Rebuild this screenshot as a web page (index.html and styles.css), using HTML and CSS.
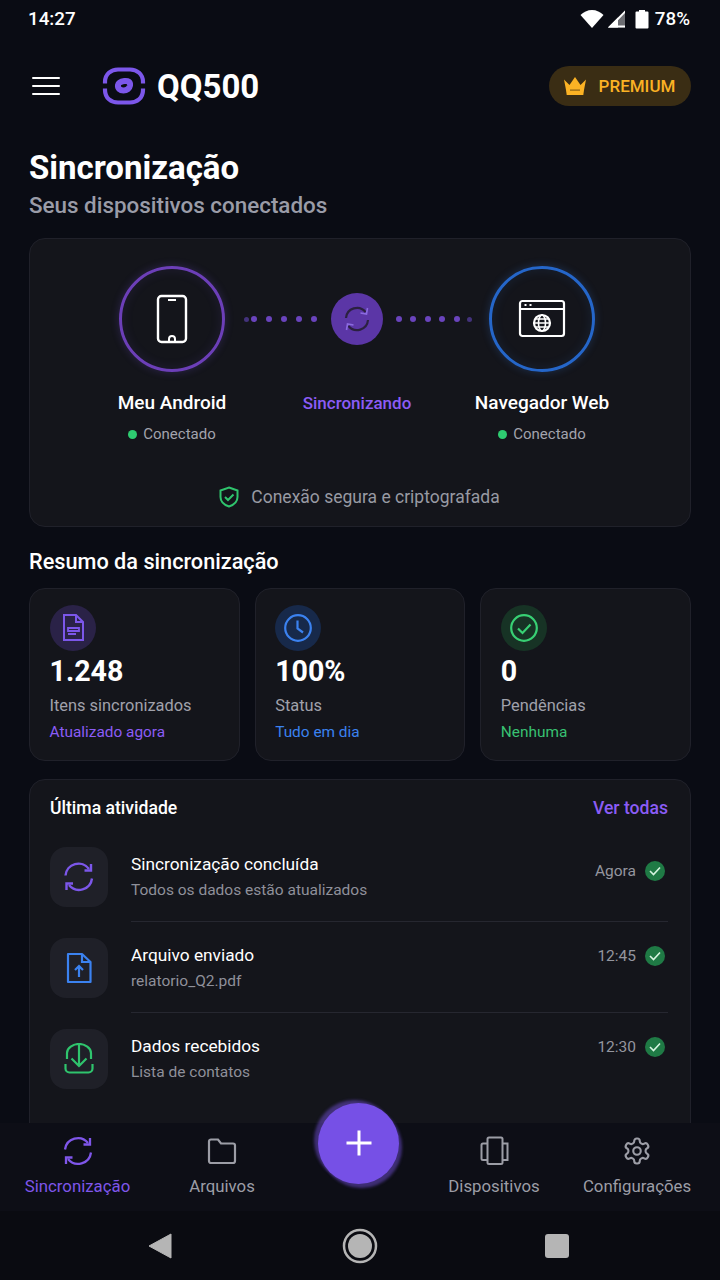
FILE: index.html
```html
<!DOCTYPE html>
<html lang="pt">
<head>
<meta charset="utf-8">
<title>QQ500</title>
<link rel="stylesheet" href="styles.css">
</head>
<body>
<div class="screen">
  <div class="status">
    <span>14:27</span>
    <div class="status-right">
      <svg width="24" height="20" viewBox="0 0 24 20"><path d="M.5 6C3.500 3 7.500 1 12 1s8.500 2 11.500 5L12 19z" fill="#fff"/></svg>
      <svg width="20" height="20" viewBox="0 0 20 20"><path d="M1 18.500 18 1.500v17z" fill="#fff" opacity=".4"/><path d="M1 18.500 11 8.500v10z" fill="#fff"/><path d="M1 18.500 18 1.500v2.500L6 16.500h12v2z" fill="#fff"/></svg>
      <svg class="batt" width="14" height="20" viewBox="0 0 14 20"><path d="M4 2.500V1h6v1.500h2.500a1 1 0 0 1 1 1V18.500a1 1 0 0 1-1 1H1.500a1 1 0 0 1-1-1V3.500a1 1 0 0 1 1-1z" fill="#fff"/></svg>
      <span>78%</span>
    </div>
  </div>

  <header class="topbar">
    <div class="burger"><i></i><i></i><i></i></div>
    <svg class="logo" width="44" height="38" viewBox="0 0 44 38" fill="none" stroke="#7c57ea" stroke-width="4.200"><path d="M3 16.500V15C3 7 9 2.500 16 2.500H28C35 2.500 41 7 41 15V16.500"/><path d="M3 21.500V23C3 31 9 35.500 16 35.500H28C35 35.500 41 31 41 23V21.500"/><path d="M22.500 14C26 13.500 28.500 15 28 18.500 27.500 21.500 25 23.500 21.500 23.500 18 23.500 15.500 21.500 16 18 16.500 15.500 19 14.500 22.500 14Z" stroke-width="6"/></svg>
    <div class="brand">QQ500</div>
    <div class="premium">
      <svg width="24" height="20" viewBox="0 0 24 20"><path d="M1 3.500 6.500 9 12 1l5.500 8L23 3.500 21 14H3z" fill="#fbb224"/><path d="M3 14h18l-.7 5H3.700z" fill="#fbb224"/><rect x="7" y="13.500" width="10" height="1.200" fill="#8a6216"/></svg>
      <span>PREMIUM</span>
    </div>
  </header>

  <main class="content">
    <h1 class="title">Sincronização</h1>
    <p class="subtitle">Seus dispositivos conectados</p>

    <section class="card sync">
      <div class="sync-row">
        <div class="device">
          <div class="ring ring-purple">
            <svg width="32" height="50" viewBox="0 0 32 50" fill="none" stroke="#fff" stroke-width="2.400"><rect x="2" y="2" width="28" height="46" rx="3.500"/><path d="M12 6h8" stroke-width="2"/><path d="M13 47v-2a3 3 0 0 1 6 0v2" stroke-width="2"/></svg>
          </div>
          <div class="dev-name">Meu Android</div>
          <div class="dev-state"><i class="dot"></i>Conectado</div>
        </div>
        <div class="middle">
          <div class="link">
            <div class="dots dots-left"><i class="faint"></i><i></i><i></i><i></i><i></i><i></i></div>
            <div class="hub">
              <svg width="28" height="28" viewBox="0 0 28 28" fill="none" stroke="#2b2140" stroke-width="2.200"><path d="M3 13A11 11 0 0 1 22.500 7"/><path d="M25 15A11 11 0 0 1 5.500 21"/><path d="M24.500 3l-1 6-6-1" stroke="#8b6be0" stroke-width="1.600"/><path d="M3.500 25l1-6 6 1" stroke="#8b6be0" stroke-width="1.600"/></svg>
            </div>
            <div class="dots dots-right"><i></i><i></i><i></i><i></i><i></i><i class="faint"></i></div>
          </div>
          <div class="syncing">Sincronizando</div>
        </div>
        <div class="device">
          <div class="ring ring-blue">
            <svg width="48" height="40" viewBox="0 0 48 40" fill="none" stroke="#fff" stroke-width="2.200"><rect x="2" y="2" width="44" height="35" rx="2.500"/><path d="M2 10h44"/><path d="M6.500 6h2M11.500 6h2" stroke-width="2"/><circle cx="24" cy="24" r="8"/><ellipse cx="24" cy="24" rx="3.500" ry="8" stroke-width="1.600"/><path d="M16 24h16M17.500 20h13M17.500 28h13" stroke-width="1.600"/></svg>
          </div>
          <div class="dev-name">Navegador Web</div>
          <div class="dev-state"><i class="dot"></i>Conectado</div>
        </div>
      </div>
      <div class="secure">
        <svg width="20" height="22" viewBox="0 0 20 22" fill="none" stroke="#2fc46d" stroke-width="2"><path d="M10 1.500 18.500 4.500V11C18.500 16 14.500 19 10 20.500 5.500 19 1.500 16 1.500 11V4.500Z"/><path d="M6 11l3 3 5.500-5.500"/></svg>
        <span>Conexão segura e criptografada</span>
      </div>
    </section>

    <h2 class="section-title">Resumo da sincronização</h2>
    <section class="stats">
      <div class="card stat">
        <div class="stat-icon tint-purple">
          <svg width="24" height="30" viewBox="0 0 24 30" fill="none" stroke="#7c57ea" stroke-width="2"><path d="M3 2H15L22 9V27H3Z"/><path d="M15 2V9H22"/><path d="M7 15H18V18H7ZM7 21H15" stroke-width="1.800"/></svg>
        </div>
        <div class="stat-value">1.248</div>
        <div class="stat-label">Itens sincronizados</div>
        <div class="stat-note purple">Atualizado agora</div>
      </div>
      <div class="card stat">
        <div class="stat-icon tint-blue">
          <svg width="30" height="30" viewBox="0 0 30 30" fill="none" stroke="#3b82f0" stroke-width="2.200"><circle cx="15" cy="15" r="12.800"/><path d="M14.500 7.500V15.500L20 19.500"/></svg>
        </div>
        <div class="stat-value">100%</div>
        <div class="stat-label">Status</div>
        <div class="stat-note blue">Tudo em dia</div>
      </div>
      <div class="card stat">
        <div class="stat-icon tint-green">
          <svg width="30" height="30" viewBox="0 0 30 30" fill="none" stroke="#38d074" stroke-width="2.200"><circle cx="15" cy="15" r="12.800"/><path d="M9 15.500l4.500 4.500 8-8.500"/></svg>
        </div>
        <div class="stat-value">0</div>
        <div class="stat-label">Pendências</div>
        <div class="stat-note green">Nenhuma</div>
      </div>
    </section>

    <section class="card activity">
      <div class="act-head"><span class="act-title">Última atividade</span><span class="act-all">Ver todas</span></div>

      <div class="act-row">
        <div class="act-icon">
          <svg width="30" height="30" viewBox="0 0 30 30" fill="none" stroke="#7c57ea" stroke-width="2.400"><path d="M1.500 13.500A13 13 0 0 1 25 7"/><path d="M28 16.500A13 13 0 0 1 5 23"/><path d="M27 2v6.500h-6.500"/><path d="M2.500 28v-6.500H9"/></svg>
        </div>
        <div class="act-body"><div class="act-name">Sincronização concluída</div><div class="act-desc">Todos os dados estão atualizados</div></div>
        <div class="act-meta"><span>Agora</span><i class="ok"><svg width="12" height="10" viewBox="0 0 12 10" fill="none" stroke="#d6f5e0" stroke-width="1.600"><path d="M1 5l3.500 3.500L11 1.500"/></svg></i></div>
      </div>

      <div class="act-row">
        <div class="act-icon">
          <svg width="26" height="32" viewBox="0 0 26 32" fill="none" stroke="#3b82f0" stroke-width="2.200"><path d="M2 2H16L24.500 10V30H2Z" stroke-linejoin="round"/><path d="M16 2V10H24.500"/><path d="M13 25V14M9 18l4-4 4 4"/></svg>
        </div>
        <div class="act-body"><div class="act-name">Arquivo enviado</div><div class="act-desc">relatorio_Q2.pdf</div></div>
        <div class="act-meta"><span>12:45</span><i class="ok"><svg width="12" height="10" viewBox="0 0 12 10" fill="none" stroke="#d6f5e0" stroke-width="1.600"><path d="M1 5l3.500 3.500L11 1.500"/></svg></i></div>
      </div>

      <div class="act-row">
        <div class="act-icon">
          <svg width="30" height="32" viewBox="0 0 30 32" fill="none" stroke="#2fc46d" stroke-width="2.200"><path d="M3 16V10C3 5 9 1 15 1S27 5 27 10V16"/><path d="M15 1V23M7.500 15.500 15 23l7.500-7.500"/><path d="M1.500 21V25.500a4 4 0 0 0 4 4H24.500a4 4 0 0 0 4-4V21"/></svg>
        </div>
        <div class="act-body"><div class="act-name">Dados recebidos</div><div class="act-desc">Lista de contatos</div></div>
        <div class="act-meta"><span>12:30</span><i class="ok"><svg width="12" height="10" viewBox="0 0 12 10" fill="none" stroke="#d6f5e0" stroke-width="1.600"><path d="M1 5l3.500 3.500L11 1.500"/></svg></i></div>
      </div>
    </section>
  </main>

  <nav class="tabs">
    <div class="tab active">
      <svg width="30" height="30" viewBox="0 0 30 30" fill="none" stroke="currentColor" stroke-width="2.300"><path d="M2 13.500A13 13 0 0 1 25 7"/><path d="M28 16.500A13 13 0 0 1 5 23"/><path d="M27 2v6.500h-6.500"/><path d="M3 28v-6.500h6.500"/></svg>
      <span>Sincronização</span>
    </div>
    <div class="tab">
      <svg width="30" height="30" viewBox="0 0 30 30" fill="none" stroke="currentColor" stroke-width="2.200"><path d="M2 5.500A2 2 0 0 1 4 3.500H11L14 7.500H26A2 2 0 0 1 28 9.500V25A2 2 0 0 1 26 27H4A2 2 0 0 1 2 25Z"/></svg>
      <span>Arquivos</span>
    </div>
    <div class="tab gap"></div>
    <div class="tab">
      <svg width="30" height="30" viewBox="0 0 30 30" fill="none" stroke="currentColor" stroke-width="2"><rect x="8.500" y="1.500" width="15" height="26.500" rx="1.500"/><path d="M8.500 7.500H4A1.500 1.500 0 0 0 2.500 9V22.500A1.500 1.500 0 0 0 4 24H8.500M23.500 7.500H28.500V24H23.500"/></svg>
      <span>Dispositivos</span>
    </div>
    <div class="tab">
      <svg width="30" height="30" viewBox="0 0 24 24" fill="none" stroke="currentColor" stroke-width="1.700" stroke-linejoin="round"><path d="M12.220 2h-.44a2 2 0 0 0-2 2v.18a2 2 0 0 1-1 1.730l-.43.250a2 2 0 0 1-2 0l-.15-.08a2 2 0 0 0-2.730.730l-.22.380a2 2 0 0 0 .73 2.730l.15.100a2 2 0 0 1 1 1.720v.510a2 2 0 0 1-1 1.740l-.15.090a2 2 0 0 0-.73 2.730l.22.380a2 2 0 0 0 2.730.730l.15-.08a2 2 0 0 1 2 0l.43.250a2 2 0 0 1 1 1.730V20a2 2 0 0 0 2 2h.44a2 2 0 0 0 2-2v-.18a2 2 0 0 1 1-1.730l.43-.25a2 2 0 0 1 2 0l.15.080a2 2 0 0 0 2.730-.73l.22-.39a2 2 0 0 0-.73-2.730l-.15-.08a2 2 0 0 1-1-1.740v-.5a2 2 0 0 1 1-1.740l.15-.09a2 2 0 0 0 .73-2.730l-.22-.38a2 2 0 0 0-2.730-.73l-.15.080a2 2 0 0 1-2 0l-.43-.25a2 2 0 0 1-1-1.730V4a2 2 0 0 0-2-2z"/><circle cx="12" cy="12" r="3"/></svg>
      <span>Configurações</span>
    </div>
    <div class="fab"><svg width="28" height="28" viewBox="0 0 28 28" stroke="#fff" stroke-width="3"><path d="M14 1.500v25M1.500 14h25"/></svg></div>
  </nav>

  <div class="sysnav">
    <svg width="24" height="26" viewBox="0 0 24 26"><path d="M23 1V25L1 13Z" fill="#b5b5b5" stroke="#b5b5b5" stroke-linejoin="round"/></svg>
    <svg width="36" height="38" viewBox="0 0 36 38"><circle cx="18" cy="19" r="16" fill="none" stroke="#b5b5b5" stroke-width="2.500"/><circle cx="18" cy="19" r="12" fill="#b5b5b5"/></svg>
    <div class="stop"></div>
  </div>
</div>
</body>
</html>
```
FILE: styles.css
```css
* { box-sizing: border-box; margin: 0; padding: 0; }
html, body { width: 720px; height: 1280px; overflow: hidden; background: #0a0c14; }
body { font-family: Roboto, "Noto Sans", sans-serif; color: #fff; }
.screen { width: 720px; height: 1280px; display: flex; flex-direction: column; background: #0a0c14; }

.status { height: 38px; flex: none; padding: 0 30px 0 28px; display: flex; justify-content: space-between; align-items: center; font-size: 18.800px; font-weight: 500; }
.status-right { display: flex; align-items: center; gap: 3px; }
.status-right .batt { margin: 0 3px 0 5px; }

.topbar { height: 96px; flex: none; padding: 0 29px 0 32px; display: flex; align-items: center; }
.burger { width: 28px; display: flex; flex-direction: column; gap: 5.500px; margin-right: 42px; }
.burger i { display: block; height: 2.500px; background: #fff; border-radius: 1px; }
.logo { margin-right: 11px; }
.brand { font-size: 33px; font-weight: 700; }
.premium { margin-left: auto; width: 142px; height: 40px; border-radius: 20px; background: #3a2d14; display: flex; align-items: center; justify-content: center; gap: 12px; color: #fbb224; font-size: 17px; font-weight: 500; padding-right: 2px; }

.content { flex: 1; min-height: 0; overflow: hidden; padding: 0 29px; display: flex; flex-direction: column; }
.title { font-size: 33px; font-weight: 700; line-height: 38px; margin-top: 15px; }
.subtitle { font-size: 22.400px; font-weight: 500; line-height: 28px; color: #9a9ca8; margin-top: 4px; }

.card { background: #14151b; border: 1px solid #20212a; border-radius: 16px; }
.sync { flex: none; height: 289px; margin-top: 19px; padding: 27px 0 0; display: flex; flex-direction: column; }
.sync-row { display: grid; grid-template-columns: 284px 86px 284px; }
.device { display: flex; flex-direction: column; align-items: center; }
.ring { width: 106px; height: 106px; border-radius: 50%; display: flex; align-items: center; justify-content: center; border: 3px solid; }
.ring-purple { border-color: #6c3fb8; box-shadow: 0 0 8px rgba(124,87,234,.25), inset 0 0 12px rgba(124,87,234,.12); }
.ring-blue { border-color: #2566c9; box-shadow: 0 0 8px rgba(59,130,240,.25), inset 0 0 12px rgba(59,130,240,.12); }
.dev-name { font-size: 19px; font-weight: 500; line-height: 24px; margin-top: 19px; }
.dev-state { display: flex; align-items: center; gap: 6px; font-size: 15px; line-height: 20px; color: #a2a3ad; margin-top: 9px; }
.dot { width: 9px; height: 9px; border-radius: 50%; background: #2ecc71; }

.middle { display: flex; flex-direction: column; align-items: center; }
.link { height: 106px; display: flex; align-items: center; justify-content: center; gap: 14px; margin: 0 -72px 0 -70px; }
.dots { display: flex; gap: 9px; align-items: center; }
.dots i { width: 6px; height: 6px; border-radius: 50%; background: #6a44bd; }
.dots i.faint { background: #43327c; width: 5px; height: 5px; }
.dots-left i.faint { margin-right: -7.500px; }
.dots-right { gap: 8.500px; margin-left: -1px; }
.dots-right i.faint { margin-left: -1.500px; }
.hub { width: 52px; height: 52px; border-radius: 50%; background: #5b36a6; display: flex; align-items: center; justify-content: center; }
.syncing { font-size: 17px; font-weight: 500; line-height: 22px; color: #8b5cf6; margin-top: 20px; white-space: nowrap; }

.secure { display: flex; align-items: center; justify-content: center; gap: 12px; margin-top: 41px; font-size: 17.500px; color: #989aa3; line-height: 24px; padding-right: 1px; }

.section-title { font-size: 21.700px; font-weight: 500; line-height: 28px; margin-top: 21px; }
.stats { flex: none; display: grid; grid-template-columns: repeat(3, 1fr); gap: 15px; margin-top: 12px; }
.stat { height: 173px; padding: 16px 20px 0 19.500px; }
.stat-icon { width: 46px; height: 46px; border-radius: 50%; display: flex; align-items: center; justify-content: center; }
.tint-purple { background: #2a2247; }
.tint-blue { background: #17294a; }
.tint-green { background: #173325; }
.stat-value { font-size: 28.600px; font-weight: 700; line-height: 34px; margin-top: 3px; }
.stat-label { font-size: 16.400px; line-height: 22px; color: #a0a1ab; margin-top: 7px; }
.stat-note { font-size: 15.400px; line-height: 20px; margin-top: 5px; }
.purple { color: #8b5cf6; }
.blue { color: #3b82f0; }
.green { color: #38c172; }

.activity { flex: none; height: 380px; margin-top: 18px; padding: 0 22px 0 20px; }
.act-head { display: flex; justify-content: space-between; align-items: center; height: 56px; }
.act-title { font-size: 17.600px; font-weight: 500; }
.act-all { font-size: 17.600px; font-weight: 500; color: #8b5cf6; }
.act-row { display: flex; height: 91px; padding-top: 11px; position: relative; }
.act-row + .act-row::before { content: ""; position: absolute; top: -6px; left: 81px; right: 0; height: 1px; background: #262730; }
.act-icon { width: 58px; height: 60px; border-radius: 16px; background: #1f2028; display: flex; align-items: center; justify-content: center; flex: none; }
.act-body { margin-left: 23px; flex: 1; }
.act-name { font-size: 17.300px; line-height: 24px; margin-top: 5px; }
.act-desc { font-size: 15.500px; line-height: 20px; color: #8f909a; margin-top: 4px; }
.act-meta { display: flex; align-items: flex-start; gap: 9px; font-size: 15.500px; line-height: 20px; color: #94959f; padding: 14px 3px 0 0; }
.act-row + .act-row .act-meta { padding-top: 8px; }
.ok { width: 20px; height: 20px; border-radius: 50%; background: #1f7a45; display: flex; align-items: center; justify-content: center; }

.tabs { flex: none; height: 88px; background: #0d0e16; display: grid; grid-template-columns: 155px 134px 142px 126px 160px; position: relative; }
.tab { display: flex; flex-direction: column; align-items: center; padding-top: 13px; font-size: 16.800px; color: #9c9da6; gap: 8px; line-height: 24px; white-space: nowrap; }
.tab.active { color: #7f56ea; }
.fab { position: absolute; left: 318px; top: -20px; width: 81px; height: 81px; border-radius: 50%; background: #7650e6; display: flex; align-items: center; justify-content: center; box-shadow: -4px -3px 3px rgba(124,87,234,.45), 3px 4px 3px rgba(124,87,234,.45); }
.fab svg { margin-top: -1px; }

.sysnav { flex: none; height: 69px; background: #0a0b11; display: grid; grid-template-columns: 320px 80px 320px; align-items: center; justify-items: center; }
.sysnav svg:first-child { justify-self: end; margin-right: 148px; }
.stop { width: 24px; height: 24px; background: #b5b5b5; border-radius: 3px; justify-self: start; margin-left: 145px; }
```
